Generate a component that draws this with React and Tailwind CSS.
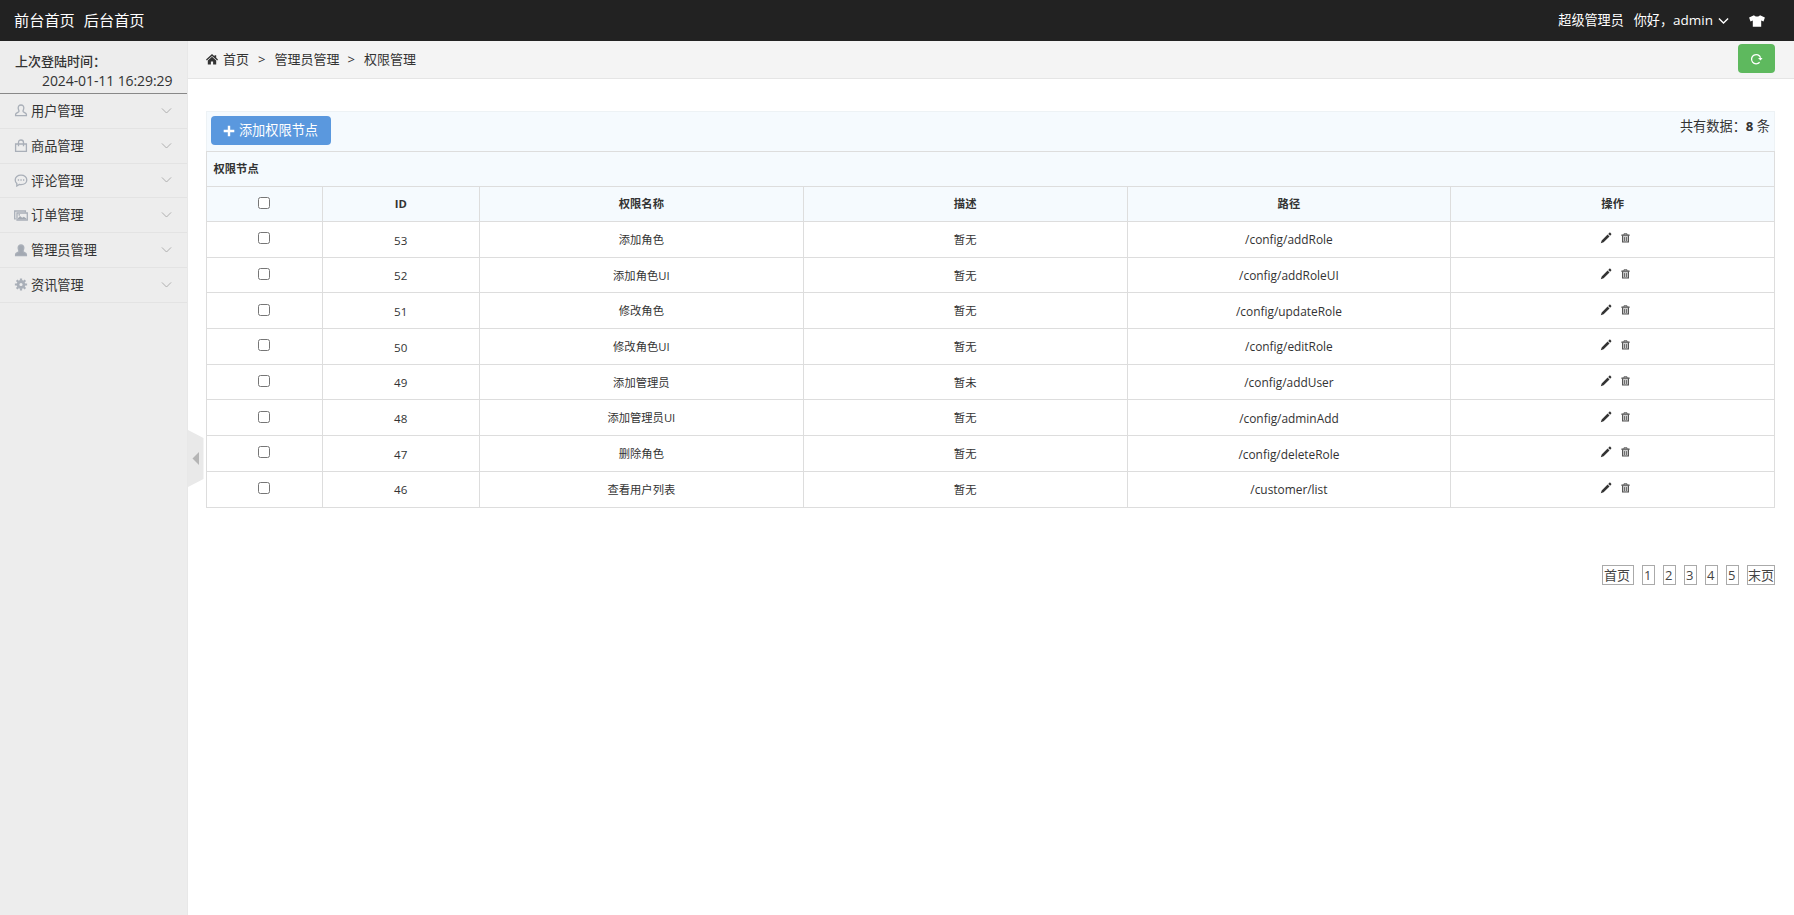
const NAV_ITEMS = [
  { key: 'user', label: '用户管理' },
  { key: 'goods', label: '商品管理' },
  { key: 'comment', label: '评论管理' },
  { key: 'order', label: '订单管理' },
  { key: 'admin', label: '管理员管理' },
  { key: 'news', label: '资讯管理' },
]

const ROWS = [
  { id: 53, name: '添加角色', desc: '暂无', path: '/config/addRole' },
  { id: 52, name: '添加角色UI', desc: '暂无', path: '/config/addRoleUI' },
  { id: 51, name: '修改角色', desc: '暂无', path: '/config/updateRole' },
  { id: 50, name: '修改角色UI', desc: '暂无', path: '/config/editRole' },
  { id: 49, name: '添加管理员', desc: '暂未', path: '/config/addUser' },
  { id: 48, name: '添加管理员UI', desc: '暂无', path: '/config/adminAdd' },
  { id: 47, name: '删除角色', desc: '暂无', path: '/config/deleteRole' },
  { id: 46, name: '查看用户列表', desc: '暂无', path: '/customer/list' },
]

const PERSON = 'M7 1C9 1 9.9 2.3 9.8 4C9.8 5.5 9 6.2 9 7.2C9 8.6 12.4 8.8 12.4 10.4V11.6H1.6V10.4C1.6 8.8 5 8.6 5 7.2C5 6.2 4.2 5.5 4.2 4C4.1 2.3 5 1 7 1Z'

function NavIcon({ name }) {
  return (
    <svg viewBox="0 0 14 13" className="w-[14px] h-[13px] shrink-0" fill="none" stroke="#a9afb8" strokeWidth="1.3">
      {name === 'user' && <path d={PERSON} />}
      {name === 'admin' && <path d={PERSON} fill="#a3a9b2" />}
      {name === 'goods' && (
        <>
          <path d="M1.6 5H12.4V12.3H1.6Z" />
          <path d="M4.5 7.2V3.4C4.5 .2 9.5 .2 9.5 3.4V7.2" />
        </>
      )}
      {name === 'comment' && (
        <>
          <path d="M7 1.2C10.4 1.2 12.8 3.2 12.8 5.9S10.4 10.6 7 10.6C6.4 10.6 5.8 10.5 5.3 10.4L2.8 12V9.4C1.8 8.5 1.2 7.3 1.2 5.9C1.2 3.2 3.6 1.2 7 1.2Z" />
          <path d="M3.8 6H5.1M6.4 6H7.7M9 6H10.3" strokeWidth="1.4" />
        </>
      )}
      {name === 'order' && (
        <>
          <path d="M1.8 9.8H.7V2H11.4V3.4" />
          <path d="M3 4H13.3V11H3Z" />
          <path d="M4 10.2V9.2L6 7L8.2 8.8L9.8 7.8L12.4 9.6V10.2Z" fill="#a3a9b2" stroke="none" />
          <circle cx="5.2" cy="5.9" r=".8" fill="#a3a9b2" stroke="none" />
        </>
      )}
      {name === 'news' && (
        <>
          <circle cx="7" cy="6.5" r="3" strokeWidth="2.8" />
          <path d="M7 .4V2.6M7 10.4V12.6M.9 6.5H3M11 6.5H13.1M2.7 2.2L4.2 3.7M9.8 9.3L11.3 10.8M11.3 2.2L9.8 3.7M4.2 9.3L2.7 10.8" strokeWidth="2.2" />
        </>
      )}
    </svg>
  )
}

function Chevron({ className }) {
  return (
    <svg viewBox="0 0 12 8" className={className} fill="none" stroke="currentColor">
      <path d="M1 1.2L6 6.2L11 1.2" />
    </svg>
  )
}

function PencilIcon() {
  return (
    <svg viewBox="0 0 12 12" className="w-3 h-3" fill="#333">
      <path d="M.8 11.2L1.7 8.4L7.6 2.5L9.5 4.4L3.6 10.3ZM8.2 1.9L9.2 .9C9.6 .5 10.1 .5 10.5 .9L11.1 1.5C11.5 1.9 11.5 2.4 11.1 2.8L10.1 3.8Z" />
    </svg>
  )
}

function TrashIcon() {
  return (
    <svg viewBox="0 0 10 11" className="w-[9px] h-[10px]" fill="none" stroke="#555">
      <path d="M.5 2.4H9.5" strokeWidth="1.7" />
      <path d="M3.3 2V.8H6.7V2" />
      <path d="M1.7 3V10H8.3V3" fill="#ccc" strokeWidth="1.2" />
      <path d="M3.9 4.5V8.8M6.1 4.5V8.8" strokeWidth=".9" />
    </svg>
  )
}

function Topbar() {
  return (
    <header className="h-[41px] shrink-0 bg-[#222] text-white flex items-center justify-between pl-[14px] pr-[28px]">
      <div className="flex gap-[9px] text-[15.2px]">
        <a>前台首页</a>
        <a>后台首页</a>
      </div>
      <div className="flex items-center text-[13.1px]">
        <span>超级管理员</span>
        <span className="ml-[10px]">你好，</span>
        <span className="text-[13.5px]">admin</span>
        <Chevron className="w-[11px] h-[8px] ml-[5px] [stroke-width:1.5]" />
        <svg viewBox="0 0 16 12" className="w-4 h-3 ml-5 mr-px" fill="#fff">
          <path d="M5 .3C6 2 10 2 11 .3L15.9 2.6L14.5 6.4L12.2 5.4V11.8H3.8V5.4L1.5 6.4L.1 2.6Z" />
        </svg>
      </div>
    </header>
  )
}

function Sidebar() {
  return (
    <aside className="w-[188px] shrink-0 bg-[#ededed] border-r border-[#e8e8e8]">
      <div className="h-[53px] pt-[10px] text-[13px] leading-5 border-b border-[#888]">
        <p className="pl-[15px] font-medium">上次登陆时间：</p>
        <p className="pl-[42px] text-[14px] tracking-[-0.09px] whitespace-nowrap">2024-01-11 16:29:29</p>
      </div>
      <nav>
        {NAV_ITEMS.map(item => (
          <div key={item.key} className="h-[34.8px] pl-[14px] pr-[15px] flex items-center border-b border-[#e3e3e3] text-[13.2px]">
            <NavIcon name={item.key} />
            <span className="ml-[3px] pt-[2px]">{item.label}</span>
            <Chevron className="w-[11px] h-[8px] ml-auto text-[#aaa]" />
          </div>
        ))}
      </nav>
    </aside>
  )
}

function Breadcrumb() {
  return (
    <div className="h-[38px] bg-[#f4f4f4] border-b border-[#e5e5e5] flex items-center pl-[18px] pr-[19px] text-[13px]">
      <svg viewBox="0 0 12 11" className="w-3 h-[11px] mr-[5px]" fill="#333">
        <path d="M6 .1L8.5 2.3V1.2H10.2V3.8L12 5.4L11.2 6.5L6 2L.8 6.5L0 5.4Z" />
        <path d="M6 2.8L10.2 6.4V10.6H7.1V7.5H4.9V10.6H1.8V6.4Z" />
      </svg>
      <span>首页</span>
      <span className="mx-[9px]">&gt;</span>
      <span>管理员管理</span>
      <span className="ml-[8px] mr-[9px]">&gt;</span>
      <span>权限管理</span>
      <button className="ml-auto w-[37px] h-[29px] rounded-[4px] bg-[#5eb95e] flex items-center justify-center relative -top-px">
        <svg viewBox="0 0 14 13" className="w-[13px] h-3" fill="none" stroke="#fff" strokeWidth="1.4">
          <path d="M10.4 10A5 5 0 1 1 11.4 5.2" />
          <path d="M8.6 5.3H13.6L11.4 8.2Z" fill="#fff" stroke="none" />
        </svg>
      </button>
    </div>
  )
}

const COLS = 'grid grid-cols-[116px_157.5px_323.7px_323.9px_323.7px_1fr]'
const CELL = 'border-r border-[#ddd] flex items-center justify-center'

function Checkbox() {
  return <span className="w-3 h-3 rounded-[2.5px] border border-[#767676] bg-white relative -top-px" />
}

function PermissionTable() {
  return (
    <div className="border-l border-t border-[#ddd] text-[11.3px]">
      <div className="h-[35px] bg-[#f5fafe] border-b border-r border-[#ddd] flex items-center pl-[7px] pt-px font-bold">权限节点</div>
      <div className={`${COLS} h-[35px] bg-[#f5fafe] border-b border-[#ddd] font-bold`}>
        <div className={CELL}><Checkbox /></div>
        <div className={CELL}>ID</div>
        <div className={CELL}>权限名称</div>
        <div className={CELL}>描述</div>
        <div className={CELL}>路径</div>
        <div className={CELL}>操作</div>
      </div>
      {ROWS.map(row => (
        <div key={row.id} className={`${COLS} h-[35.7px] border-b border-[#ddd]`}>
          <div className={CELL}><Checkbox /></div>
          <div className={`${CELL} pt-[2px] text-[11.6px]`}>{row.id}</div>
          <div className={`${CELL} pt-[2px]`}>{row.name}</div>
          <div className={`${CELL} pt-[2px]`}>{row.desc}</div>
          <div className={`${CELL} pt-[2px] text-[11.9px]`}>{row.path}</div>
          <div className={`${CELL} gap-[9px] pl-[4px] pb-[2px]`}>
            <PencilIcon />
            <TrashIcon />
          </div>
        </div>
      ))}
    </div>
  )
}

function Pager() {
  return (
    <div className="mt-[57px] flex justify-end gap-[8px] text-[13px] leading-[18px] text-[#444]">
      <a className="w-8 h-5 border border-[#aaa] pl-px whitespace-nowrap">首页</a>
      {[1, 2, 3, 4, 5].map(n => (
        <a key={n} className="w-[13px] h-5 border border-[#aaa] pl-px">{n}</a>
      ))}
      <a className="w-7 h-5 border border-[#aaa] text-center whitespace-nowrap">末页</a>
    </div>
  )
}

export default function App() {
  return (
    <div className="h-screen w-full flex flex-col overflow-hidden bg-white text-[#333] font-['Open_Sans','Noto_Sans_CJK_SC',sans-serif]">
      <Topbar />
      <div className="flex flex-1 min-h-0 relative">
        <Sidebar />
        <main className="flex-1 min-w-0">
          <Breadcrumb />
          <div className="pt-[32px] pl-[17.5px] pr-[19px]">
            <div className="h-10 bg-[#f5fafe] border-x border-t border-[#edf2f5] flex justify-between pl-1 pr-1 pt-1 text-[13px]">
              <button className="w-[120px] h-[29px] pt-px rounded-[4px] bg-[#5a98de] text-white text-[13.2px] flex items-center justify-center gap-[4px]">
                <svg viewBox="0 0 12 12" className="w-3 h-3" stroke="#fff" strokeWidth="2.4">
                  <path d="M6 .7V11.3M.7 6H11.3" />
                </svg>
                添加权限节点
              </button>
              <span className="leading-5 text-[13.2px]">共有数据：<b>8</b> 条</span>
            </div>
            <PermissionTable />
            <Pager />
          </div>
        </main>
        {/* sidebar collapse handle */}
        <svg viewBox="0 0 16 57" className="absolute left-[188px] top-[389px] w-4 h-[57px]">
          <path d="M0 0L15.5 8V49L0 57Z" fill="#e9e9e9" />
          <path d="M11 22V35L4.5 28.5Z" fill="#b5b5b5" />
        </svg>
      </div>
    </div>
  )
}
